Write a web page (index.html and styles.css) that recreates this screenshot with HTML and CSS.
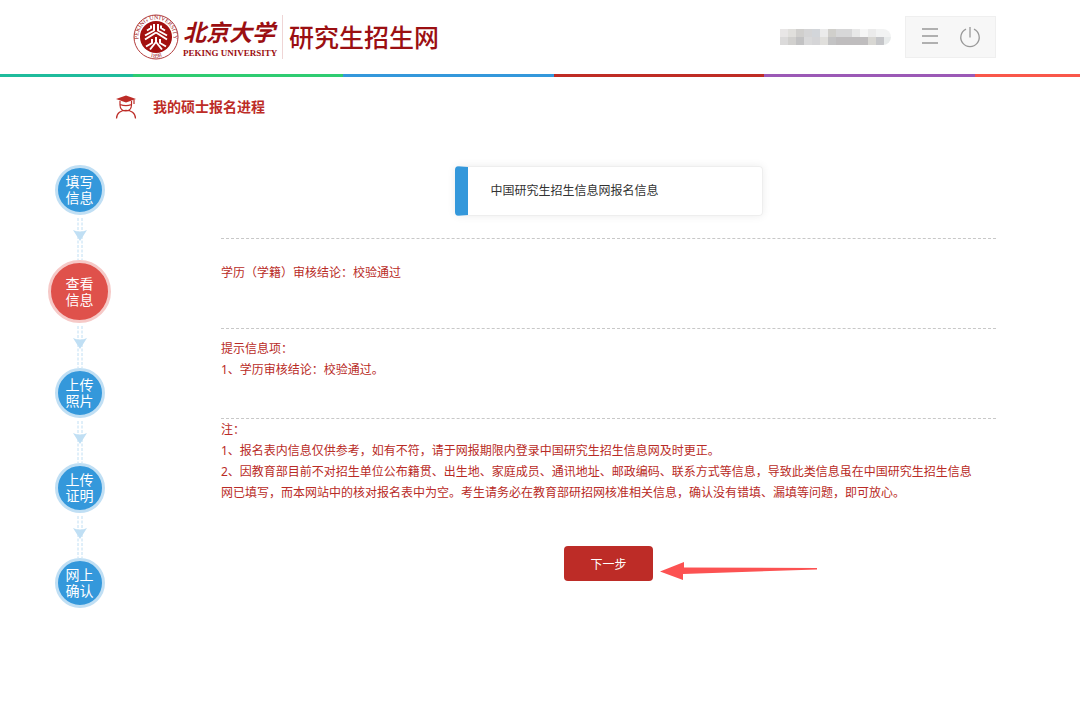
FILE: index.html
```html
<!DOCTYPE html>
<html lang="zh-CN">
<head>
<meta charset="UTF-8">
<meta name="viewport" content="width=device-width, initial-scale=1.0">
<title>研究生招生网</title>
<link rel="stylesheet" href="styles.css">
</head>
<body>

<header class="header">
    <a href="#" class="logo">
        <svg class="seal" width="46" height="46" viewBox="0 0 46 46">
            <defs>
                <path id="ring-top" d="M8.400 32.800 A17.600 17.600 0 1 1 37.600 32.800"/>
                <path id="ring-bottom" d="M8 37.500 A21 21 0 0 0 38 37.500"/>
            </defs>
            <circle cx="23" cy="23" r="22" fill="#fff" stroke="#b23c3c" stroke-width="1"/>
            <circle cx="23" cy="23" r="16" fill="#a3100f"/>
            <text class="seal-text"><textPath href="#ring-top" startOffset="50%" text-anchor="middle">PEKING UNIVERSITY</textPath></text>
            <text class="seal-text"><textPath href="#ring-bottom" startOffset="50%" text-anchor="middle">1898</textPath></text>
            <g fill="none" stroke="#fff" stroke-width="2" stroke-linejoin="round">
                <path d="M21 10v6.500l-9 5M25 10v6.500l9 5M18 11.500v2.500l-4 2.500M28 11.500v2.500l4 2.500"/>
                <path d="M23 18.500l-11 7M23 18.500l11 7"/>
                <path d="M19 25v4l-6 3.500M27 25v4l6 3.500M23 23v5l-6 7.500M23 28l6 7.500"/>
            </g>
        </svg>
        <span class="school">
            <span class="school-cn">北京大学</span>
            <span class="school-en">PEKING UNIVERSITY</span>
        </span>
        <span class="site-name">研究生招生网</span>
    </a>
    <div class="user">
        <svg class="user-name" width="111" height="16" viewBox="0 0 111 16" shape-rendering="crispEdges">
            <rect x="0" y="0" width="8" height="8" fill="#e8e6e6"/>
            <rect x="8" y="0" width="8" height="8" fill="#e0dfdc"/>
            <rect x="16" y="0" width="8" height="8" fill="#d0cfcd"/>
            <rect x="24" y="0" width="8" height="8" fill="#d5d5d6"/>
            <rect x="32" y="0" width="8" height="8" fill="#d3d6da"/>
            <rect x="40" y="0" width="8" height="8" fill="#ebebeb"/>
            <rect x="48" y="0" width="8" height="8" fill="#d0cfcb"/>
            <rect x="56" y="0" width="16" height="8" fill="#d7d7d8"/>
            <rect x="72" y="0" width="8" height="8" fill="#e8e8e8"/>
            <rect x="80" y="0" width="8" height="8" fill="#f6f6f6"/>
            <rect x="88" y="0" width="8" height="8" fill="#ebebeb"/>
            <rect x="96" y="0" width="15" height="8" fill="#f2f3f3"/>
            <rect x="0" y="8" width="8" height="8" fill="#dbdada"/>
            <rect x="8" y="8" width="8" height="8" fill="#d1d0ce"/>
            <rect x="16" y="8" width="8" height="8" fill="#c2c2c3"/>
            <rect x="24" y="8" width="8" height="8" fill="#d9d9da"/>
            <rect x="32" y="8" width="8" height="8" fill="#d5d5d7"/>
            <rect x="40" y="8" width="8" height="8" fill="#e0dfdc"/>
            <rect x="48" y="8" width="8" height="8" fill="#c3c3c4"/>
            <rect x="56" y="8" width="32" height="8" fill="#bfbdbe"/>
            <rect x="88" y="8" width="8" height="8" fill="#d8d7d3"/>
            <rect x="96" y="8" width="8" height="8" fill="#c5c6c9"/>
            <rect x="104" y="8" width="7" height="8" fill="#e8ebeb"/>
        </svg>
        <div class="tools">
            <button type="button" class="tool" aria-label="菜单">
                <svg width="18" height="20" viewBox="0 0 18 20"><path d="M1 2h16M1 9h16M1 16h16" stroke="#999" stroke-width="1.6"/></svg>
            </button>
            <button type="button" class="tool" aria-label="退出">
                <svg width="22" height="22" viewBox="0 0 22 22" fill="none" stroke="#999" stroke-width="1.3"><path d="M7 3.100A9.200 9.200 0 1 0 15 3.100M11 1v10.500"/></svg>
            </button>
        </div>
    </div>
</header>
<div class="stripe"></div>

<div class="page-title">
    <svg width="22" height="24" viewBox="0 0 22 24">
        <path d="M1 4l10-3.500 10 3.500-10 3.500z" fill="#bd2c27"/>
        <path d="M19 4.500V9M5 6v4c0 8 11.500 8 11.500 0V6M5 9.500c4 1.500 8 1.500 11.500 0M1.500 23.500c0-11 19-11 19 0" fill="none" stroke="#bd2c27" stroke-width="1.2"/>
    </svg>
    <h1>我的硕士报名进程</h1>
</div>

<div class="main">
    <ol class="steps">
        <li><a href="#" class="step">填写<br>信息</a></li>
        <li>
            <svg class="link" width="14" height="45" viewBox="0 0 14 45"><use href="#connector"/></svg>
            <a href="#" class="step current">查看<br>信息</a>
        </li>
        <li>
            <svg class="link" width="14" height="45" viewBox="0 0 14 45"><use href="#connector"/></svg>
            <a href="#" class="step">上传<br>照片</a>
        </li>
        <li>
            <svg class="link" width="14" height="45" viewBox="0 0 14 45"><use href="#connector"/></svg>
            <a href="#" class="step">上传<br>证明</a>
        </li>
        <li>
            <svg class="link" width="14" height="45" viewBox="0 0 14 45"><use href="#connector"/></svg>
            <a href="#" class="step">网上<br>确认</a>
        </li>
    </ol>

    <div class="content">
        <h2 class="card">中国研究生招生信息网报名信息</h2>

        <div class="section result">
            <p>学历（学籍）审核结论：校验通过</p>
        </div>
        <div class="section tips">
            <p>提示信息项：</p>
            <p>1、学历审核结论：校验通过。</p>
        </div>
        <div class="section notes">
            <p>注：</p>
            <p>1、报名表内信息仅供参考，如有不符，请于网报期限内登录中国研究生招生信息网及时更正。</p>
            <p>2、因教育部目前不对招生单位公布籍贯、出生地、家庭成员、通讯地址、邮政编码、联系方式等信息，导致此类信息虽在中国研究生招生信息网已填写，而本网站中的核对报名表中为空。考生请务必在教育部研招网核准相关信息，确认没有错填、漏填等问题，即可放心。</p>
        </div>

        <div class="actions">
            <button type="button" class="next">下一步</button>
            <svg class="pointer" width="158" height="20" viewBox="0 0 158 20"><path d="M0 10.500L24 1v5.500L157 7v1.500L23 13v6z" fill="#fc5252"/></svg>
        </div>
    </div>
</div>

<!-- dashed line with arrow between two steps -->
<svg class="defs" width="0" height="0">
    <defs>
        <g id="connector">
            <path d="M5 3v42M9 3v42" stroke="#c0dff4" stroke-width="1" stroke-dasharray="3 1.500"/>
            <path d="M0 15q7 3 14 0l-7 11z" fill="#c0dff4"/>
        </g>
    </defs>
</svg>

</body>
</html>
```

FILE: styles.css
```css
* {
    box-sizing: border-box;
}
body {
    margin: 0;
    background-color: #fff;
    color: #333;
    font-family: "Noto Sans", "Noto Sans CJK SC", sans-serif;
    font-size: 12px;
    line-height: 21px;
}
h1, h2, p, ol {
    margin: 0;
    padding: 0;
}
a {
    text-decoration: none;
}
button {
    font-family: inherit;
    border: 0;
    cursor: pointer;
}

/* header */
.header {
    display: flex;
    justify-content: space-between;
    align-items: center;
    height: 74px;
    padding: 0 84px 0 133px;
}
.logo {
    display: flex;
    align-items: center;
    color: #9b0f12;
}
.seal-text {
    font-family: "Liberation Serif", serif;
    font-size: 6px;
    fill: #9b0f12;
}
.school {
    display: flex;
    flex-direction: column;
    width: 104px;
    padding: 4px 0 0 4px;
    border-right: 1px solid #efd5d5;
    white-space: nowrap;
}
.school-cn {
    font-family: "Liberation Sans", "Noto Sans CJK SC", sans-serif;
    font-size: 23px;
    font-weight: 700;
    font-style: italic;
    line-height: 28px;
}
.school-en {
    font-family: "Liberation Serif", serif;
    font-size: 9px;
    font-weight: 700;
    line-height: 12px;
}
.site-name {
    margin-left: 6px;
    font-size: 25px;
    font-weight: 500;
    line-height: 36px;
}
.user {
    display: flex;
    align-items: center;
    gap: 14px;
}
.user-name {
    border-radius: 0 8px 8px 0;
}
.tools {
    display: flex;
    justify-content: center;
    align-items: center;
    gap: 20px;
    width: 91px;
    height: 42px;
    border: 1px solid #efefef;
    background-color: #f7f7f7;
}
.tool {
    display: flex;
    padding: 0;
    background: none;
}
.stripe {
    height: 3px;
    background: linear-gradient(
        to right,
        #1fbc9c calc(50% - 407px),
        #2ecc71 0 calc(50% - 197px),
        #3498db 0 calc(50% + 14px),
        #bf2c24 0 calc(50% + 224px),
        #9b59b6 0 calc(50% + 435px),
        #f9574a 0
    );
}

.page-title {
    display: flex;
    align-items: center;
    gap: 16px;
    padding: 18px 0 0 115px;
    color: #bd2c27;
}
.page-title h1 {
    font-size: 14px;
    line-height: 24px;
}

.main {
    display: flex;
    align-items: flex-start;
    padding: 46px 84px 40px 48px;
}

/* progress */
.steps {
    flex: none;
    width: 63px;
    margin-right: 110px;
    list-style: none;
}
.steps li {
    display: flex;
    flex-direction: column;
    align-items: center;
}
.step {
    display: flex;
    justify-content: center;
    align-items: center;
    width: 50px;
    height: 50px;
    border: 3px solid #c0dff4;
    border-radius: 50%;
    background-color: #3498db;
    color: #fff;
    font-family: "Liberation Sans", "Noto Sans CJK SC", sans-serif;
    font-size: 14px;
    line-height: 16px;
}
.current {
    width: 63px;
    height: 63px;
    border-color: #f6c9c7;
    background-color: #df514b;
}

/* content */
.content {
    flex: 1;
    padding-top: 1px;
}
.card {
    width: 308px;
    height: 50px;
    margin: 0 auto 22px;
    padding-left: 23px;
    border: 1px solid #eee;
    border-left: 13px solid #3498db;
    border-radius: 4px;
    box-shadow: 0 0 8px rgba(0, 0, 0, 0.08);
    font-size: 12px;
    font-weight: 400;
    line-height: 48px;
}
.section {
    min-height: 90px;
    padding-right: 20px;
    border-top: 1px dashed #c8c8c8;
    color: #b92b26;
}
.result {
    padding-top: 23px;
}
.tips {
    padding-top: 9px;
}
.actions {
    position: relative;
    margin-top: 38px;
    text-align: center;
}
.next {
    width: 89px;
    height: 35px;
    border-radius: 4px;
    background-color: #bd2c27;
    color: #fff;
    font-size: 12px;
}
.pointer {
    position: absolute;
    top: 15px;
    left: calc(50% + 51px);
}
.defs {
    position: absolute;
}
```
